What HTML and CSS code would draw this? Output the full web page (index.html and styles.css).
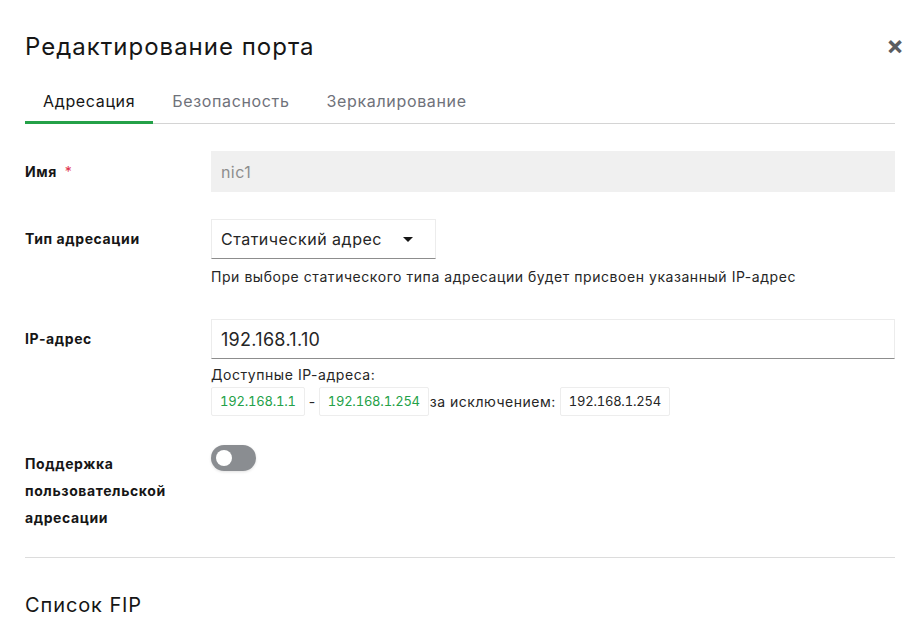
FILE: index.html
```
<!DOCTYPE html>
<html lang="ru">
  <head>
    <meta charset="UTF-8" />
    <meta name="viewport" content="width=device-width, initial-scale=1.0" />
    <title>Редактирование порта</title>
    <link rel="stylesheet" href="styles.css">
  </head>

  <body>
    <div class="modal">
      <div class="modal-header">
        <h1>Редактирование порта</h1>
        <span class="close">&times;</span>
      </div>

      <div class="tabs">
        <div class="tab active">Адресация</div>
        <div class="tab">Безопасность</div>
        <div class="tab">Зеркалирование</div>
      </div>

      <div class="form">
        <div class="row row-name">
          <label class="label">Имя <span class="required">*</span></label>
          <div class="field">
            <div class="input input-disabled">nic1</div>
          </div>
        </div>

        <div class="row row-type">
          <label class="label">Тип адресации</label>
          <div class="field">
            <div class="select">
              <span>Статический адрес</span>
              <span class="caret"></span>
            </div>
            <div class="hint">При выборе статического типа адресации будет присвоен указанный IP-адрес</div>
          </div>
        </div>

        <div class="row row-ip">
          <label class="label">IP-адрес</label>
          <div class="field">
            <div class="input input-ip">192.168.1.10</div>
            <div class="hint hint-ip">Доступные IP-адреса:</div>
            <div class="ranges">
              <span class="chip chip-green">192.168.1.1</span>
              <span class="dash">-</span>
              <span class="chip chip-green">192.168.1.254</span>
              <span class="except">за исключением:</span>
              <span class="chip">192.168.1.254</span>
            </div>
          </div>
        </div>

        <div class="row row-toggle">
          <label class="label label-wrap">Поддержка пользовательской адресации</label>
          <div class="field">
            <div class="toggle"><span class="knob"></span></div>
          </div>
        </div>
      </div>

      <div class="divider"></div>

      <h2>Список FIP</h2>
    </div>
  </body>
</html>
```

FILE: styles.css
```
* {
  margin: 0;
  padding: 0;
  box-sizing: border-box;
}

body {
  font-family: "Inter", "Noto Sans", sans-serif;
  background-color: #fff;
  color: #161616;
}

.modal {
  padding: 0 25px;
}

.modal-header {
  display: flex;
  justify-content: space-between;
  align-items: center;
  height: 90px;
  padding-top: 2px;
}

h1 {
  font-size: 24px;
  font-weight: 400;
  letter-spacing: 1px;
}

.close {
  color: #5a5c60;
  font-size: 26px;
  font-weight: 700;
  line-height: 1;
  margin-right: -9px;
}

.tabs {
  display: flex;
  border-bottom: 1px solid #d4d4d4;
  height: 34px;
}

.tab {
  font-size: 16px;
  letter-spacing: 0.65px;
  color: #6f727a;
  padding: 0 18px;
  height: 34px;
  line-height: 22px;
  margin-right: 1px;
}

.tab.active {
  color: #161616;
  border-bottom: 3px solid #24a148;
  margin-bottom: -1px;
}

.form {
  padding-top: 27px;
}

.row {
  display: flex;
}

.label {
  width: 186px;
  flex-shrink: 0;
  font-size: 14px;
  font-weight: 700;
  letter-spacing: 0.6px;
  color: #161616;
}

.required {
  color: #e0314b;
  font-weight: 400;
  margin-left: 4px;
}

.field {
  flex: 1;
}

.input {
  height: 40px;
  padding: 0 10px;
  display: flex;
  align-items: center;
}

.input-disabled {
  background-color: #f0f0f0;
  color: #8d8d8d;
  font-size: 16px;
  letter-spacing: 0.4px;
  height: 41px;
}

.row-name .label {
  line-height: 41px;
}

.row-type {
  margin-top: 27px;
}

.row-type .label {
  line-height: 40px;
}

.select {
  width: 225px;
  height: 40px;
  border: 1px solid #ececec;
  border-bottom: 1px solid #8d8d8d;
  display: flex;
  align-items: center;
  justify-content: space-between;
  padding: 0 22px 0 9px;
  font-size: 16px;
  letter-spacing: 0.5px;
  color: #262626;
}

.caret {
  width: 0;
  height: 0;
  border-left: 5px solid transparent;
  border-right: 5px solid transparent;
  border-top: 5px solid #161616;
}

.hint {
  font-size: 14px;
  letter-spacing: 0.55px;
  color: #262626;
  margin-top: 8px;
  line-height: 20px;
}

.row-ip {
  margin-top: 32px;
}

.row-ip .label {
  line-height: 40px;
}

.input-ip {
  border: 1px solid #ececec;
  border-bottom: 1px solid #8d8d8d;
  font-size: 18px;
  letter-spacing: 0.3px;
  color: #262626;
  padding-left: 9px;
}

.hint-ip {
  margin-top: 6px;
}

.ranges {
  display: flex;
  align-items: center;
  margin-top: 2px;
  font-size: 14px;
  letter-spacing: 0.5px;
  color: #262626;
}

.chip {
  border: 1px solid #ededed;
  border-radius: 2px;
  padding: 0 8px;
  height: 29px;
  line-height: 27px;
  font-size: 13px;
  letter-spacing: -0.2px;
  font-variant-numeric: tabular-nums;
  color: #262626;
}

.chip-green {
  color: #24a148;
}

.dash {
  margin: 0 3px 0 4px;
}

.except {
  margin: 0 4px 0 1px;
}

.row-toggle {
  margin-top: 29px;
}

.label-wrap {
  line-height: 27px;
  padding-top: 5px;
  padding-right: 16px;
}

.toggle {
  width: 45px;
  height: 26px;
  background-color: #8a8d91;
  border-radius: 13px;
  padding: 5px;
  box-shadow: 0 1px 3px rgba(0, 0, 0, 0.12);
}

.knob {
  display: block;
  width: 16px;
  height: 16px;
  background-color: #fff;
  border-radius: 50%;
}

.divider {
  border-top: 1px solid #dcdcdc;
  margin-top: 26px;
}

h2 {
  font-size: 20px;
  font-weight: 400;
  letter-spacing: 0.9px;
  margin-top: 35px;
}
```
